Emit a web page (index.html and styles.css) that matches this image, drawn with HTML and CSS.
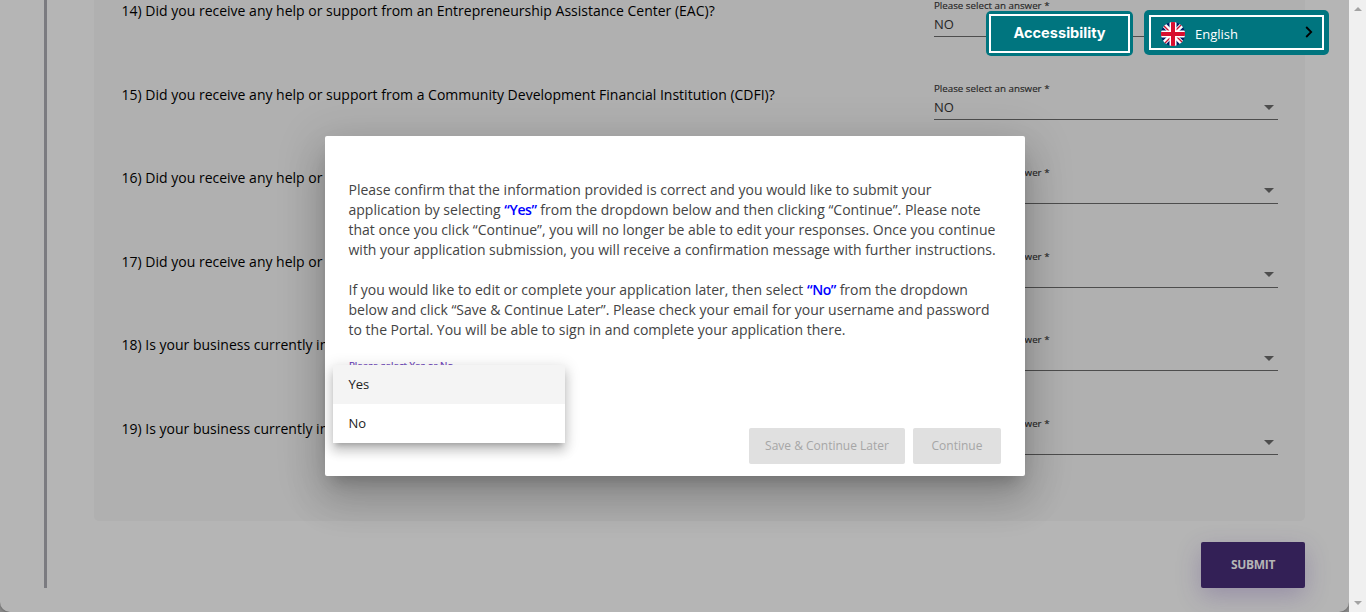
FILE: index.html
```html
<!DOCTYPE html>
<html lang="en">
<head>
<meta charset="utf-8">
<title>Application</title>
<link rel="stylesheet" href="styles.css">
</head>
<body>
<div class="viewport">
  <main class="page">
    <div class="rail"></div>
    <div class="content">
      <section class="questions">
        <div class="question"><p class="prompt">14) Did you receive any help or support from an Entrepreneurship Assistance Center (EAC)?</p><div class="field"><span class="label">Please select an answer *</span><div class="value">NO<i class="arrow"></i></div></div></div>
        <div class="question"><p class="prompt">15) Did you receive any help or support from a Community Development Financial Institution (CDFI)?</p><div class="field"><span class="label">Please select an answer *</span><div class="value">NO<i class="arrow"></i></div></div></div>
        <div class="question"><p class="prompt">16) Did you receive any help or</p><div class="field"><span class="label">Please select an answer *</span><div class="value"><i class="arrow"></i></div></div></div>
        <div class="question"><p class="prompt">17) Did you receive any help or</p><div class="field"><span class="label">Please select an answer *</span><div class="value"><i class="arrow"></i></div></div></div>
        <div class="question"><p class="prompt">18) Is your business currently in</p><div class="field"><span class="label">Please select an answer *</span><div class="value"><i class="arrow"></i></div></div></div>
        <div class="question"><p class="prompt">19) Is your business currently in</p><div class="field"><span class="label">Please select an answer *</span><div class="value"><i class="arrow"></i></div></div></div>
      </section>
      <button class="submit">SUBMIT</button>
    </div>
  </main>
  <div class="scrollbar"><i class="up"></i><i class="down"></i></div>
</div>

<div class="dialog" role="dialog">
  <div class="copy">
    <p>Please confirm that the information provided is correct and you would like to submit your<br>application by selecting <b>“Yes”</b> from the dropdown below and then clicking “Continue”. Please note<br>that once you click “Continue”, you will no longer be able to edit your responses. Once you continue<br>with your application submission, you will receive a confirmation message with further instructions.</p>
    <p>If you would like to edit or complete your application later, then select <b>“No”</b> from the dropdown<br>below and click “Save &amp; Continue Later”. Please check your email for your username and password<br>to the Portal. You will be able to sign in and complete your application there.</p>
  </div>
  <span class="label choice">Please select Yes or No</span>
  <div class="actions"><button class="later">Save &amp; Continue Later</button><button class="continue">Continue</button></div>
  <div class="menu"><div class="option active">Yes</div><div class="option">No</div></div>
</div>

<div class="tools">
  <button class="tool access"><span>Accessibility</span></button>
  <button class="tool language">
    <span>
      <svg class="flag" viewBox="0 0 48 48">
        <defs><clipPath id="disc"><circle cx="24" cy="24" r="24"/></clipPath></defs>
        <g clip-path="url(#disc)">
          <path fill="#012169" d="M0 0h48v48H0z"/>
          <path stroke="#fff" stroke-width="9" d="M0 0l48 48M48 0L0 48"/>
          <path stroke="#c8102e" stroke-width="2.8" d="M0 2l22 22M48 46L26 24M46 0L24 22M2 48l22-22"/>
          <path stroke="#fff" stroke-width="14" d="M24 0v48M0 24h48"/>
          <path stroke="#d80f2f" stroke-width="8" d="M24 0v48M0 24h48"/>
        </g>
      </svg>
      English
      <svg class="chevron" viewBox="0 0 8 12"><path d="M1.2 1l5 5-5 5" fill="none" stroke="#000" stroke-width="1.8"/></svg>
    </span>
  </button>
</div>
</body>
</html>
```
FILE: styles.css
```css
* { box-sizing: border-box; }
body { margin: 0; height: 612px; overflow: hidden; font-family: "Open Sans", sans-serif; font-size: 14px; background: #8a8a8a; }
p { margin: 0; }
button { border: 0; font-family: inherit; padding: 0; }
.viewport { display: flex; height: 612px; }
.page { flex: 1; display: flex; background: #b5b5b5; border-radius: 0 0 10px 10px; box-shadow: 0 1px 3px #666; }
.rail { width: 3px; height: 588px; margin-left: 44px; background: #7b7b80; }
.content { width: 1211px; margin-left: 47px; display: flex; flex-direction: column; align-items: flex-end; }
.questions { width: 100%; height: 521px; background: #b0b0b0; border-radius: 0 0 5px 5px; padding: 0 27px 0 27.6px; overflow: hidden; }
.question { display: flex; justify-content: space-between; height: 83.8px; white-space: nowrap; }
.question:first-child { height: 83px; }
.question:nth-child(2) .prompt { padding-top: 2px; }
.prompt { line-height: 20px; padding-top: 1px; color: #000; }
.field { width: 344px; height: 37px; border-bottom: 1px solid #4d4d4d; }
.label { display: block; height: 14px; font-size: 13px; line-height: 14px; transform: scale(.75); transform-origin: 0 0; color: #262626; -webkit-text-stroke: .2px; white-space: nowrap; }
.field .label { height: 15px; line-height: 15px; }
.value { display: flex; align-items: center; height: 19px; padding-bottom: 2px; font-size: 13px; line-height: 18px; color: #252525; }
.arrow { border: 5px solid transparent; border-top-color: #4d4d4d; border-bottom: 0; margin: 1px 4px 0 auto; }
.submit { width: 104px; height: 46px; margin-top: 21px; border-radius: 2px; padding-bottom: 2px; background: #332056; color: #b5b5b5; font-size: 12px; font-weight: 700; letter-spacing: -.3px; box-shadow: 0 8px 24px rgba(75, 45, 130, .28); }
.scrollbar { width: 17px; background: #f0f0f0; display: flex; flex-direction: column; justify-content: space-between; align-items: center; padding: 7px 0; }
.scrollbar i { border: 4px solid transparent; }
.scrollbar .up { border-top: 0; border-bottom-color: #a3a3a3; }
.scrollbar .down { border-bottom: 0; border-top-color: #a3a3a3; }
.dialog { position: absolute; left: 325px; top: 136px; width: 700px; height: 340px; padding: 44px 24px 12px 23.5px; background: #fff; border-radius: 2px; display: flex; flex-direction: column; box-shadow: 0 11px 15px -7px rgba(0,0,0,.2), 0 24px 38px 3px rgba(0,0,0,.14), 0 9px 46px 8px rgba(0,0,0,.12); }
.copy { line-height: 20px; color: #444; white-space: nowrap; }
.copy p + p { margin-top: 20px; }
.copy b { color: #00f; font-weight: 600; letter-spacing: -.4px; }
.choice { color: #673ab7; margin-top: 20px; }
.actions { display: flex; justify-content: flex-end; gap: 8px; margin-top: auto; }
.actions button { height: 36px; border-radius: 2px; padding-bottom: 2px; background: #e0e0e0; color: #a6a6a6; font-size: 12px; font-weight: 500; }
.later { width: 156px; }
.continue { width: 88px; }
.menu { position: absolute; left: 8px; top: 229px; width: 232px; height: 78px; background: #fff; box-shadow: 0 5px 5px -3px rgba(0,0,0,.2), 0 8px 10px 1px rgba(0,0,0,.14), 0 3px 14px 2px rgba(0,0,0,.12); }
.option { height: 39px; line-height: 39px; padding-left: 15.5px; font-size: 13px; color: #222; }
.option.active { background: #f4f4f4; }
.tools { position: absolute; left: 986px; top: 10px; display: flex; align-items: flex-start; gap: 11px; }
.tool { background: #00757f; border-radius: 5px; padding: 3px; }
.tool > span { display: flex; align-items: center; height: 100%; border: 2px solid #fff; color: #fff; }
.access { width: 147px; height: 45px; margin-top: 1px; }
.access > span { justify-content: center; padding-bottom: 1px; font: 700 14.6px Inter, sans-serif; }
.language { width: 185px; height: 45px; padding: 5px; font-size: 13px; }
.language > span { padding: 2px 10px 0 10px; }
.flag { width: 24px; height: 24px; margin-right: 10px; }
.chevron { width: 8px; height: 12px; margin: -3px -1px 0 auto; }
```
